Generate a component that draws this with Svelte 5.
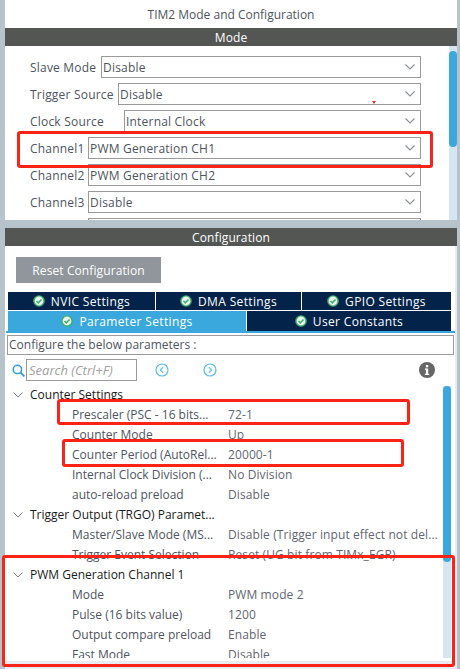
<script lang="ts">
  const modeRows = [
    { label: 'Slave Mode', width: 71, value: 'Disable' },
    { label: 'Trigger Source', width: 88, value: 'Disable' },
    { label: 'Clock Source', width: 94, value: 'Internal Clock' },
    { label: 'Channel1', width: 58, value: 'PWM Generation CH1' },
    { label: 'Channel2', width: 58, value: 'PWM Generation CH2' },
    { label: 'Channel3', width: 58, value: 'Disable' },
    { label: '', width: 58, value: '' }
  ];

  const groups = [
    {
      title: 'Counter Settings',
      params: [
        ['Prescaler (PSC - 16 bits...', '72-1'],
        ['Counter Mode', 'Up'],
        ['Counter Period (AutoRel...', '20000-1'],
        ['Internal Clock Division (...', 'No Division'],
        ['auto-reload preload', 'Disable']
      ]
    },
    {
      title: 'Trigger Output (TRGO) Paramet...',
      params: [
        ['Master/Slave Mode (MS...', 'Disable (Trigger input effect not del...'],
        ['Trigger Event Selection', 'Reset (UG bit from TIMx_EGR)']
      ]
    },
    {
      title: 'PWM Generation Channel 1',
      params: [
        ['Mode', 'PWM mode 2'],
        ['Pulse (16 bits value)', '1200'],
        ['Output compare preload', 'Enable'],
        ['Fast Mode', 'Disable']
      ]
    }
  ];
</script>

{#snippet check()}
  <svg class="check" viewBox="0 0 12 12" width="12" height="12">
    <circle cx="6" cy="6" r="5.8" fill="#3fae6a" />
    <circle cx="6" cy="6" r="4.4" fill="#e9f5ee" />
    <path d="M3.5 6l1.8 1.8 3.2-3.4" fill="none" stroke="#3fae6a" stroke-width="1.5" />
  </svg>
{/snippet}

{#snippet chevron()}
  <svg class="chevron" viewBox="0 0 10 6" width="10" height="6">
    <path d="M.5.5L5 5l4.5-4.5" fill="none" stroke="#8a9096" stroke-width="1.1" />
  </svg>
{/snippet}

<div class="page">
  <div class="title">TIM2 Mode and Configuration</div>

  <div class="bar">Mode</div>
  <section class="mode">
    <div class="mode-list">
      {#each modeRows as row}
        <div class="mode-row">
          <span class="mode-label" style="width: {row.width}px">{row.label}</span>
          <div class="select">
            <span>{row.value}</span>
            {@render chevron()}
          </div>
        </div>
      {/each}
    </div>
    <div class="scroll scroll-mode"><div class="thumb"></div></div>
  </section>

  <div class="gap"></div>

  <div class="bar">Configuration</div>
  <section class="config">
    <div class="config-inner">
      <button class="reset">Reset Configuration</button>

      <div class="tabs">
        <div class="tab-row top">
          <div class="tab nvic">{@render check()}NVIC Settings</div>
          <div class="tab dma">{@render check()}DMA Settings</div>
          <div class="tab gpio">{@render check()}GPIO Settings</div>
        </div>
        <div class="tab-row bottom">
          <div class="tab param active">{@render check()}Parameter Settings</div>
          <div class="tab user">{@render check()}User Constants</div>
        </div>
      </div>
      <div class="tab-line"></div>

      <div class="describe">Configure the below parameters :</div>

      <div class="search-row">
        <svg class="loupe" viewBox="0 0 13 13" width="13" height="13">
          <circle cx="5.4" cy="5.4" r="4.2" fill="none" stroke="#2f9fdc" stroke-width="1.5" />
          <path d="M8.4 8.4l4 4" stroke="#2f9fdc" stroke-width="1.8" />
        </svg>
        <div class="search">Search (Ctrl+F)</div>
        <svg class="nav prev" viewBox="0 0 14 14" width="14" height="14">
          <circle cx="7" cy="7" r="6" fill="none" stroke="#5cbce8" stroke-width="1.2" />
          <path d="M8.2 4.2L5.4 7l2.8 2.8" fill="none" stroke="#5cbce8" stroke-width="1.2" />
        </svg>
        <svg class="nav next" viewBox="0 0 14 14" width="14" height="14">
          <circle cx="7" cy="7" r="6" fill="none" stroke="#5cbce8" stroke-width="1.2" />
          <path d="M5.8 4.2L8.6 7l-2.8 2.8" fill="none" stroke="#5cbce8" stroke-width="1.2" />
        </svg>
        <svg class="info" viewBox="0 0 16 16" width="16" height="16">
          <circle cx="8" cy="8" r="8" fill="#666" />
          <rect x="6.9" y="3" width="2.3" height="2.3" fill="#fff" />
          <path d="M5.9 6.6h3.3v5.2h1v1.2H5.9v-1.2h1V7.8h-1z" fill="#fff" />
        </svg>
      </div>

      <div class="tree-wrap">
        <div class="tree">
          {#each groups as group}
            <div class="group-title">
              <svg class="tree-arrow" viewBox="0 0 10 6" width="10" height="6">
                <path d="M.5.5L5 5l4.5-4.5" fill="none" stroke="#808080" stroke-width="1" />
              </svg>
              {group.title}
            </div>
            {#each group.params as param}
              <div class="param-row">
                <span class="param-name">{param[0]}</span>
                <span class="param-value">{param[1]}</span>
              </div>
            {/each}
          {/each}
        </div>
        <div class="scroll scroll-tree"><div class="thumb"></div></div>
      </div>
    </div>
    <div class="config-foot"></div>
  </section>

  <div class="mark a"></div>
  <div class="mark b"></div>
  <div class="mark c"></div>
  <div class="mark d"></div>
  <div class="speck"></div>
</div>

<style>
  :global(body) {
    margin: 0;
    background: #b6c3ca;
  }

  .page {
    position: relative;
    width: 460px;
    height: 669px;
    box-sizing: border-box;
    padding: 0 3px 0 5px;
    display: flex;
    flex-direction: column;
    overflow: hidden;
    font-family: "Open Sans", "Liberation Sans", sans-serif;
    font-size: 12px;
    color: #4d5461;
  }

  .title {
    height: 28px;
    flex-shrink: 0;
    background: #fff;
    text-align: center;
    line-height: 30px;
    color: #4d5461;
  }

  .bar {
    height: 18px;
    flex-shrink: 0;
    background: #545654;
    color: #fff;
    text-align: center;
    line-height: 19px;
    letter-spacing: 0.1px;
  }

  .mode {
    height: 174px;
    flex-shrink: 0;
    display: flex;
    justify-content: space-between;
    background: #fff;
    overflow: hidden;
  }

  .mode-list {
    width: 416px;
    box-sizing: border-box;
    padding: 10px 0 0 25px;
    display: flex;
    flex-direction: column;
    gap: 5px;
    letter-spacing: 0.2px;
  }

  .mode-row {
    display: flex;
    align-items: center;
    height: 22px;
    flex-shrink: 0;
  }

  .mode-label {
    flex-shrink: 0;
    white-space: nowrap;
  }

  .select {
    flex: 1;
    height: 22px;
    box-sizing: border-box;
    border: 1px solid #9a9a9a;
    padding: 0 5px 0 1px;
    display: flex;
    align-items: center;
    justify-content: space-between;
    background: #fff;
  }

  .scroll {
    width: 8px;
    background: #d5e6f3;
  }

  .thumb {
    background: #3aa8dc;
    border-radius: 4px;
  }

  .scroll-mode {
    padding-top: 5px;
    height: 169px;
  }

  .scroll-mode .thumb {
    height: 96px;
  }

  .gap {
    height: 8px;
    flex-shrink: 0;
  }

  .config {
    flex: 1;
    min-height: 0;
    display: flex;
    flex-direction: column;
    background: #e9ecf0;
  }

  .config-inner {
    height: 415px;
    width: 450px;
    flex-shrink: 0;
    background: #fff;
    display: flex;
    flex-direction: column;
    overflow: hidden;
  }

  .reset {
    align-self: flex-start;
    margin: 11px 0 0 11px;
    width: 145px;
    height: 26px;
    padding: 0;
    border: none;
    background: #90969c;
    color: #fff;
    font: inherit;
    letter-spacing: 0.1px;
    flex-shrink: 0;
  }

  .tabs {
    margin: 9px 0 0 3px;
    width: 443px;
    flex-shrink: 0;
  }

  .tab-row {
    display: flex;
    gap: 1px;
  }

  .tab-row.top {
    height: 18px;
    margin-bottom: 1px;
  }

  .tab-row.bottom {
    height: 20px;
  }

  .tab {
    display: flex;
    align-items: center;
    justify-content: center;
    gap: 6px;
    background: #03234b;
    color: #fff;
    white-space: nowrap;
    letter-spacing: 0.35px;
  }

  .nvic {
    width: 147px;
  }

  .dma {
    width: 145px;
  }

  .gpio {
    width: 149px;
  }

  .param {
    width: 238px;
  }

  .user {
    width: 204px;
  }

  .active {
    background: #3aa8dc;
  }

  .tab-line {
    height: 2px;
    margin-left: 1px;
    width: 449px;
    background: #3aa8dc;
    flex-shrink: 0;
  }

  .describe {
    margin: 2px 0 0 2px;
    width: 447px;
    height: 20px;
    box-sizing: border-box;
    border: 1px solid #9a9a9a;
    line-height: 18px;
    padding-left: 1px;
    flex-shrink: 0;
  }

  .search-row {
    position: relative;
    margin-top: 4px;
    height: 22px;
    display: flex;
    align-items: center;
    padding-left: 7px;
    flex-shrink: 0;
  }

  .search {
    margin-left: 1px;
    width: 111px;
    height: 22px;
    box-sizing: border-box;
    border: 1px solid #9a9a9a;
    padding-left: 2px;
    line-height: 20px;
    font-size: 13px;
    font-style: italic;
    color: #a0a0a0;
  }

  .loupe {
    flex-shrink: 0;
  }

  .nav.prev {
    margin-left: 18px;
  }

  .nav.next {
    margin-left: 34px;
  }

  .info {
    margin-left: 202px;
  }

  .tree-wrap {
    flex: 1;
    min-height: 0;
    margin-top: 4px;
    display: flex;
    justify-content: space-between;
    overflow: hidden;
  }

  .tree {
    flex: 1;
    min-width: 0;
    height: 273px;
    overflow: hidden;
  }

  .group-title,
  .param-row {
    height: 20px;
    line-height: 20px;
    white-space: nowrap;
  }

  .group-title {
    position: relative;
    padding-left: 25px;
    color: #1a1a1a;
  }

  .tree-arrow {
    position: absolute;
    left: 8px;
    top: 7px;
  }

  .param-row {
    display: flex;
    padding-left: 67px;
  }

  .param-name {
    width: 156px;
    flex-shrink: 0;
    color: #4d5461;
  }

  .param-value {
    color: #5f6672;
    letter-spacing: 0.1px;
  }

  .scroll-tree {
    width: 8px;
    height: 272px;
    margin: 1px 4px 0 0;
    flex-shrink: 0;
  }

  .scroll-tree .thumb {
    height: 176px;
  }

  .config-foot {
    flex: 1;
  }

  .mark {
    position: absolute;
    box-sizing: border-box;
    border: 3px solid #fb2216;
    border-radius: 3px;
    pointer-events: none;
  }

  .mark.a {
    left: 17px;
    top: 131px;
    width: 416px;
    height: 37px;
  }

  .mark.b {
    left: 57px;
    top: 399px;
    width: 353px;
    height: 26px;
  }

  .mark.c {
    left: 62px;
    top: 439px;
    width: 342px;
    height: 28px;
  }

  .mark.d {
    left: 2px;
    top: 555px;
    width: 453px;
    height: 112px;
  }

  .speck {
    position: absolute;
    left: 372px;
    top: 101px;
    width: 4px;
    height: 3px;
    background: #fb2216;
    clip-path: polygon(0 0, 100% 0, 50% 100%);
  }
</style>
